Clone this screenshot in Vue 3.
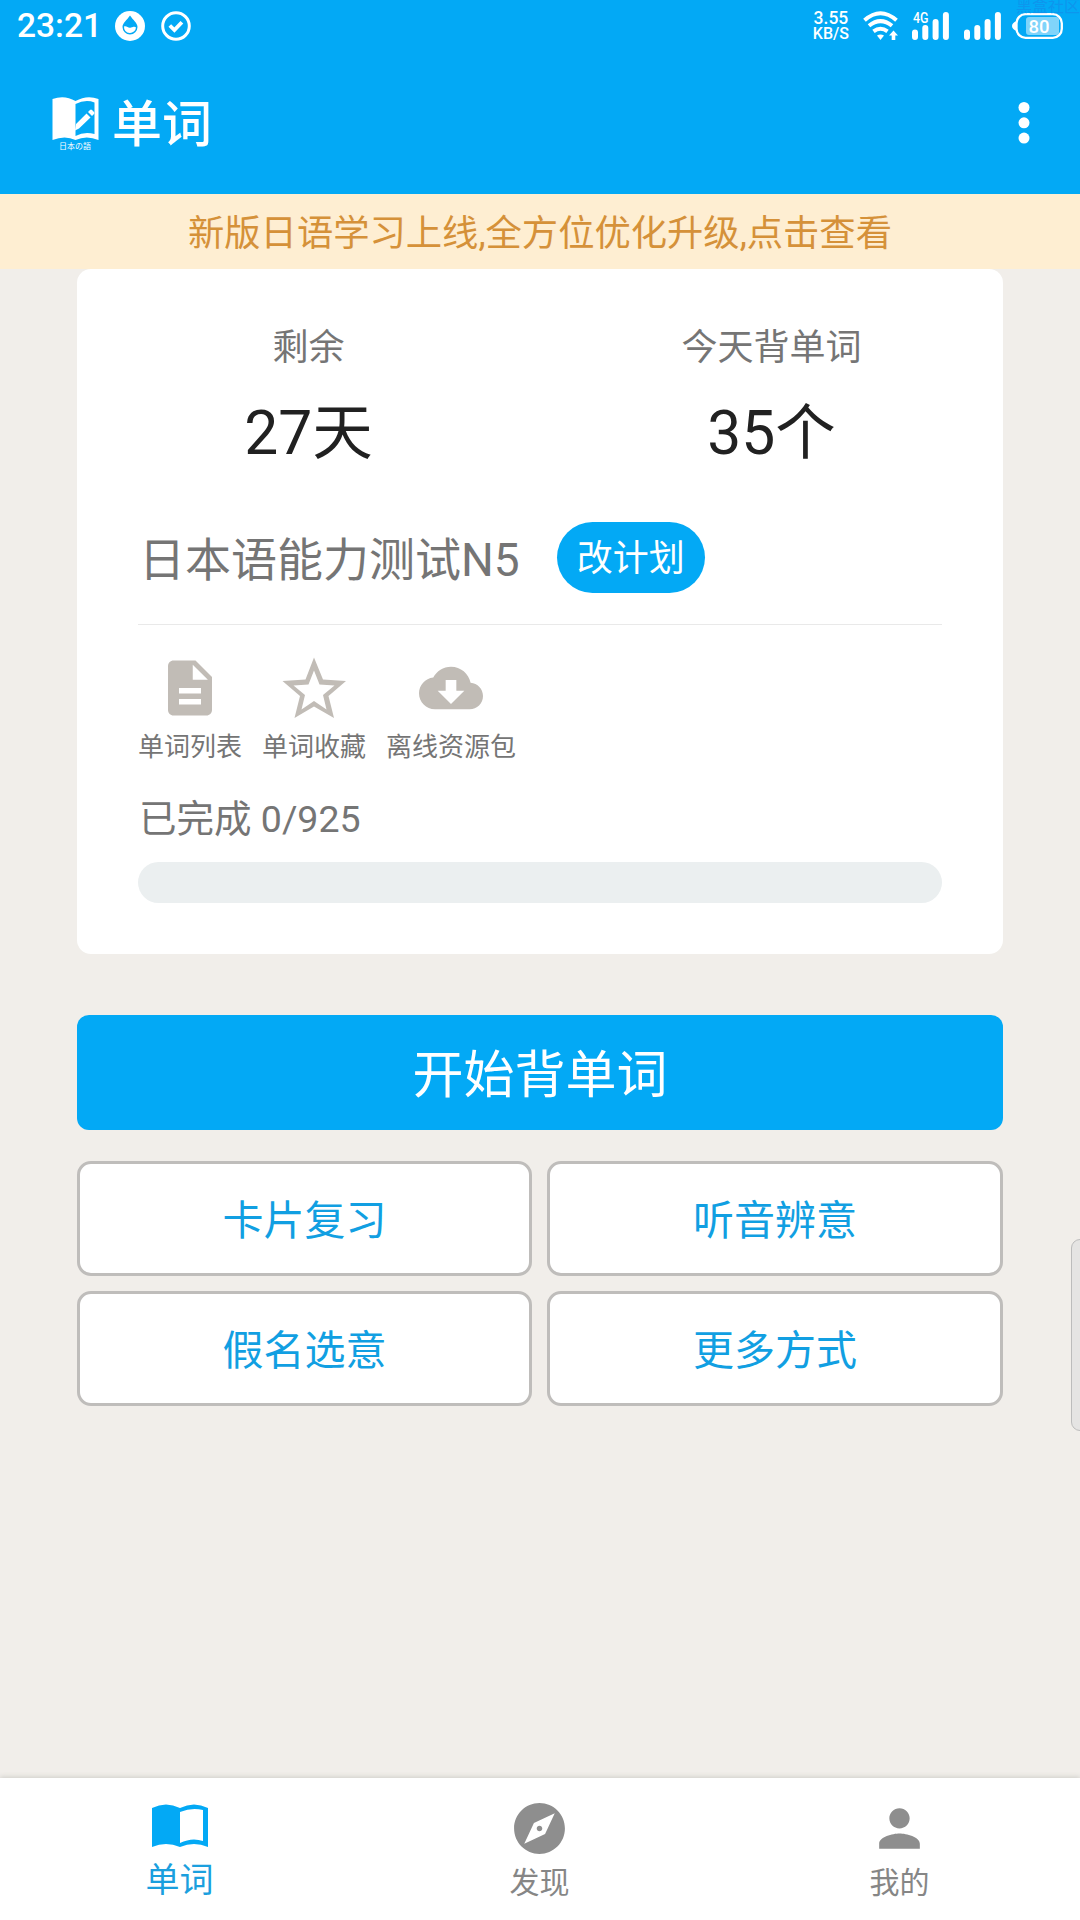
<script setup>
const stats = [
  { label: '剩余', value: '27天' },
  { label: '今天背单词', value: '35个' },
]
const modes = ['卡片复习', '听音辨意', '假名选意', '更多方式']
const completed = 0
const total = 925
</script>

<template>
  <div class="screen">
    <header>
      <div class="status">
        <span class="time">23:21</span>
        <svg class="drop" width="30" height="30" viewBox="0 0 30 30">
          <circle cx="15" cy="15" r="15" fill="#fff" />
          <path d="M15 4.500C12 9 7.500 12 7.500 16a7.500 7.500 0 0 0 15 0C22.500 12 18 9 15 4.500Z" fill="#03a9f5" />
          <path d="M9 15.500c3-1 4 2 7 1s4-1 5 0a6 6 0 0 1-12-1Z" fill="#fff" />
        </svg>
        <svg class="check" width="30" height="30" viewBox="0 0 30 30" fill="none" stroke="#fff">
          <circle cx="15" cy="15" r="13.3" stroke-width="3" />
          <path d="m8.800 14.500 4.600 4.500 7.500-7.800" stroke-width="3.800" />
        </svg>
        <span class="spacer"></span>
        <div class="speed"><span class="rate">3.55</span><span>KB/S</span></div>
        <svg width="36" height="30" viewBox="0 0 36 30" fill="none" stroke="#fff" stroke-width="4">
          <path d="M1.500 9.300Q17.500-4.800 33.500 9.300M6 14.800q11.500-9.300 23 0M10.500 20.300q7-5.200 14 0" />
          <path d="M14 24.500q3.500-2 7 0l-3.500 4.500Z" fill="#fff" stroke="none" />
          <path d="m30.500 19.500 4.500 5h-2.700V29h-3.600v-4.500H26Z" fill="#fff" stroke="none" />
        </svg>
        <svg class="sim1" width="38" height="30" viewBox="0 0 38 30">
          <text x="1" y="12" font-size="14" fill="#fff" font-weight="500" textLength="15.500" lengthAdjust="spacingAndGlyphs">4G</text>
          <path d="M3 21.500v4.500M13.300 17v9M23.600 11v15M33.900 4v22" stroke="#fff" stroke-width="6" stroke-linecap="round" />
        </svg>
        <svg class="sim2" width="38" height="30" viewBox="0 0 38 30">
          <path d="M3 21.500v4.500M13.300 17v9M23.600 11v15M33.900 4v22" stroke="#fff" stroke-width="6" stroke-linecap="round" />
        </svg>
        <svg class="battery" width="51" height="26" viewBox="0 0 51 26">
          <path d="M4.500 8Q0 10 0 13t4.500 5Z" fill="#fff" />
          <rect x="14" y="4" width="33" height="18" rx="3" fill="#80d4fa" />
          <rect x="4.500" y="1.200" width="45.300" height="23.600" rx="9" fill="none" stroke="#fff" stroke-width="2.300" />
          <text x="27" y="19.500" font-size="18.500" font-weight="500" text-anchor="middle" fill="#fff">80</text>
        </svg>
      </div>
      <div class="titlebar">
        <svg class="logo" width="48" height="54" viewBox="0 0 48 54">
          <path d="M.500 2q12-4.500 23 2Q35-2.500 46.500 2v41q-12-5-23 0Q13 38 .500 43Z" fill="#fff" />
          <path d="M23.500 7q10-5 19-1.500v31.500q-10-3-19 2Z" fill="#03a9f5" />
          <path d="M24 27 34.500 16.500l4 4L27 31.500l-4 2ZM36 15l2-2q1-1 2 0l2 2q1 1 0 2l-2 2Z" fill="#fff" />
          <text x="7" y="51.500" font-size="8" fill="#fff" textLength="32">日本の語</text>
        </svg>
        <h1>单词</h1>
        <svg class="menu" width="12" height="44" viewBox="0 0 12 44" fill="#fff">
          <circle cx="6" cy="6.500" r="5.500" /><circle cx="6" cy="21.800" r="5.500" /><circle cx="6" cy="37.100" r="5.500" />
        </svg>
      </div>
    </header>
    <div class="banner"><span>新版日语学习上线,全方位优化升级,点击查看</span></div>
    <main>
      <section class="card">
        <div class="stats">
          <div v-for="s in stats" :key="s.label" class="stat">
            <span class="label">{{ s.label }}</span>
            <span class="value">{{ s.value }}</span>
          </div>
        </div>
        <div class="plan">
          <span>日本语能力测试N5</span>
          <button>改计划</button>
        </div>
        <div class="tools">
          <div class="tool">
            <svg width="66" height="66" viewBox="0 0 24 24"><path d="M14 2H6c-1.100 0-1.990.9-1.990 2L4 20c0 1.100.89 2 1.990 2H18c1.100 0 2-.9 2-2V8l-6-6zm2 16H8v-2h8v2zm0-4H8v-2h8v2zm-3-5V3.500L18.500 9H13z" /></svg>
            <span>单词列表</span>
          </div>
          <div class="tool">
            <svg width="66" height="66" viewBox="0 0 66 66"><path fill-rule="evenodd" d="m33 2.500 9 22L65 26 47.500 41l5.500 22L33 51.500 13.500 63 19 41 1.500 26l23-1.500ZM33 15.500l-5.500 14-15 1 11.500 9.500-3.500 14.500L33 46l12.500 8.500L42 40l11.500-9.500-15-1Z" /></svg>
            <span>单词收藏</span>
          </div>
          <div class="tool">
            <svg class="cloud" width="64" height="64" viewBox="0 0 24 24"><path d="M19.350 10.040C18.670 6.590 15.640 4 12 4 9.110 4 6.600 5.640 5.350 8.040 2.340 8.360 0 10.910 0 14c0 3.310 2.690 6 6 6h13c2.760 0 5-2.240 5-5 0-2.640-2.050-4.780-4.650-4.960zM17 13l-5 5-5-5h3V9h4v4h3z" /></svg>
            <span>离线资源包</span>
          </div>
        </div>
        <div class="done">已完成 {{ completed }}/{{ total }}</div>
        <div class="track"><div class="fill" :style="{ width: (completed / total) * 100 + '%' }"></div></div>
      </section>
      <button class="start">开始背单词</button>
      <div class="modes">
        <button v-for="m in modes" :key="m">{{ m }}</button>
      </div>
    </main>
    <nav>
      <div class="tab active">
        <svg width="58" height="46" viewBox="0 0 58 46">
          <path fill-rule="evenodd" d="M1 4q14-7 28 0 14-7 28 0v39q-14-6-28 0-14-6-28 0ZM29 8v31q12-6 23-2V6q-11-3-23 2Z" />
        </svg>
        <span>单词</span>
      </div>
      <div class="tab">
        <svg width="61" height="61" viewBox="0 0 24 24"><path d="M12 10.900c-.61 0-1.100.49-1.100 1.100s.49 1.100 1.100 1.100c.61 0 1.100-.49 1.100-1.100s-.49-1.100-1.100-1.100zM12 2C6.480 2 2 6.480 2 12s4.480 10 10 10 10-4.480 10-10S17.520 2 12 2zm2.190 12.190L6 18l3.810-8.190L18 6l-3.810 8.190z" /></svg>
        <span>发现</span>
      </div>
      <div class="tab">
        <svg width="61" height="61" viewBox="0 0 24 24"><path d="M12 12c2.210 0 4-1.790 4-4s-1.790-4-4-4-4 1.790-4 4 1.790 4 4 4zm0 2c-2.670 0-8 1.340-8 4v2h16v-2c0-2.660-5.330-4-8-4z" /></svg>
        <span>我的</span>
      </div>
    </nav>
    <div class="handle"></div>
    <div class="watermark">黑盒社区</div>
  </div>
</template>

<style>
body { margin: 0; }
</style>

<style scoped>
* { box-sizing: border-box; }
.screen { position: relative; width: 1080px; height: 1920px; display: flex; flex-direction: column; overflow: hidden; background: #f1eeea; font-family: Roboto, "Noto Sans CJK SC", sans-serif; }
button { border: 0; font-family: inherit; padding: 0; }
svg { flex: none; display: block; }
header { height: 194px; background: #03a9f5; color: #fff; }
.status { height: 52px; display: flex; align-items: center; padding: 0 17px; }
.time { font-size: 33.5px; font-weight: 500; width: 98px; line-height: 52px; }
.check { margin-left: 16px; }
.spacer { flex: 1; }
.speed { display: flex; flex-direction: column; align-items: center; font-size: 16px; line-height: 15px; font-weight: 500; margin-right: 14px; }
.rate { font-size: 17.5px; }
.sim1 { margin-left: 13px; }
.sim2 { margin-left: 14px; }
.battery { margin-left: 10px; }
.titlebar { height: 142px; display: flex; align-items: flex-start; padding: 45px 50px 0 52px; }
.titlebar h1 { flex: 1; margin: -8px 0 0 12px; font-size: 50px; line-height: 72px; font-weight: 500; }
.menu { margin: 4px 0 0; }
.banner { height: 75px; padding-top: 4px; background: #feeed2; color: #d59139; text-align: center; font-size: 36.3px; line-height: 71px; }
main { flex: 1; padding: 0 77px; display: flex; flex-direction: column; }
.card { height: 685px; background: #fff; border-radius: 14px; padding: 53px 61px 0; }
.stats { display: flex; margin: 0 -61px; height: 187px; }
.stat { flex: 1; display: flex; flex-direction: column; align-items: center; }
.label { font-size: 36px; line-height: 52px; color: #757575; }
.value { font-size: 60.5px; line-height: 88px; margin-top: 16px; color: #212121; }
.plan { height: 116px; border-bottom: 1px solid #e9e9e9; display: flex; align-items: flex-start; padding: 13px 0 0 1px; font-size: 46px; line-height: 71px; color: #757575; }
.plan span { padding-top: 3px; }
.plan button { margin-left: 37px; width: 148px; height: 71px; padding-top: 3px; border-radius: 36px; background: #03a9f5; color: #fff; font-size: 36px; line-height: 68px; }
.tools { display: flex; gap: 20px; padding: 30px 0 0 0; }
.tool { display: flex; flex-direction: column; align-items: center; color: #757575; font-size: 26px; line-height: 38px; }
.tool svg { fill: #c1bcb6; }
.tool .cloud { margin: 1px 0; }
.tool span { margin-top: 7px; }
.done { margin: 26px 0 0 1px; font-size: 37.5px; line-height: 54px; color: #757575; }
.track { margin-top: 16px; height: 41px; border-radius: 21px; background: #ebeff0; overflow: hidden; }
.fill { height: 100%; background: #03a9f5; }
.start { margin-top: 61px; height: 115px; padding-bottom: 3px; border-radius: 12px; background: #03a9f5; color: #fff; font-size: 51px; }
.modes { margin-top: 31px; display: grid; grid-template-columns: 455px 456px; gap: 15px; }
.modes button { height: 115px; padding-bottom: 4px; border: 3px solid #bfbdbb; border-radius: 14px; background: #fff; color: #119fe2; font-size: 41px; }
nav { height: 142px; background: #fff; display: flex; box-shadow: 0 -1px 5px #cdcdc8; }
.tab { flex: 1; display: flex; flex-direction: column; align-items: center; font-size: 30px; line-height: 44px; color: #868686; padding: 20px 1px 0 0; }
.tab svg { fill: #8e8e8e; margin-bottom: 2px; }
.tab.active { font-size: 34px; color: #1b9fde; padding-top: 26px; }
.tab.active svg { fill: #03a9f5; margin-bottom: 8px; }
.handle { position: absolute; left: 1071px; top: 1239px; width: 20px; height: 192px; border: 1px solid #bcbcbc; border-radius: 9px; background: #e5e4e3; }
.watermark { position: absolute; right: 0; top: -3px; font-size: 16px; line-height: 20px; color: rgba(30, 120, 225, .4); }
</style>
